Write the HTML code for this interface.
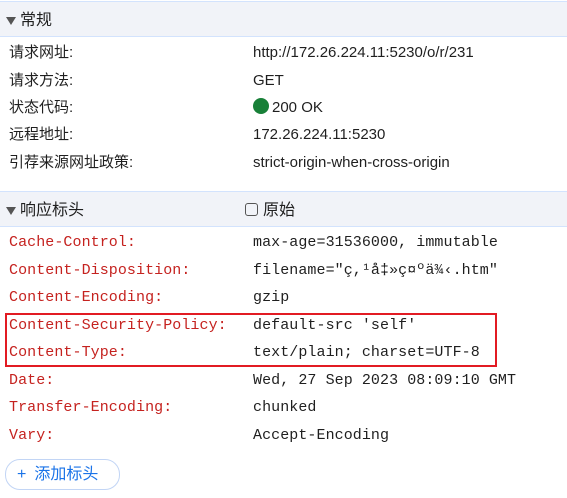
<!DOCTYPE html>
<html><head><meta charset="utf-8"><style>
body{margin:0;width:567px;height:498px;background:#fff;position:relative;overflow:hidden;font-family:"Liberation Sans","Noto Sans CJK SC",sans-serif;font-size:15px;color:#1f1f1f}
.hdr{position:absolute;left:0;width:567px;height:34px;background:#f1f3f8;border-top:1px solid #d3e3fd;border-bottom:1px solid #d3e3fd}
.ht{position:absolute;top:9px;left:20px;font-size:16px;line-height:20px}
.tri{position:absolute;left:6px;top:15px;width:0;height:0;border-left:5px solid transparent;border-right:5px solid transparent;border-top:8px solid #555}
.r,.v{position:absolute;white-space:nowrap;line-height:20px;height:20px}
.r{left:9px}
.v{left:253px}
.m{font-family:"Liberation Mono",monospace;font-size:15px;letter-spacing:0.07px}
.k{color:#c5221f}
</style></head><body>
<div class="hdr" style="top:1px"><div class="tri"></div><div class="ht">常规</div></div>
<div class="r" style="top:43px">请求网址:</div><div class="v" style="top:43px">http://172.26.224.11:5230/o/r/231</div>
<div class="r" style="top:71px">请求方法:</div><div class="v" style="top:71px">GET</div>
<div class="r" style="top:98px">状态代码:</div><div class="v" style="top:98px"><span style="display:inline-block;width:16px;height:16px;border-radius:50%;background:#188038;vertical-align:-2px;margin-right:3px"></span>200 OK</div>
<div class="r" style="top:125px">远程地址:</div><div class="v" style="top:125px">172.26.224.11:5230</div>
<div class="r" style="top:153px">引荐来源网址政策:</div><div class="v" style="top:153px">strict-origin-when-cross-origin</div>
<div class="hdr" style="top:191px"><div class="tri"></div><div class="ht">响应标头</div>
<div class="ht" style="left:245px"><span style="display:inline-block;width:11px;height:11px;border:1.5px solid #555;border-radius:3px;vertical-align:-1px;margin-right:5px"></span>原始</div></div>
<div class="r m k" style="top:233px">Cache-Control:</div><div class="v m" style="top:233px">max-age=31536000, immutable</div>
<div class="r m k" style="top:261px">Content-Disposition:</div><div class="v m" style="top:261px">filename="ç,¹å‡»ç¤ºä¾‹.htm"</div>
<div class="r m k" style="top:288px">Content-Encoding:</div><div class="v m" style="top:288px">gzip</div>
<div class="r m k" style="top:316px">Content-Security-Policy:</div><div class="v m" style="top:316px">default-src 'self'</div>
<div class="r m k" style="top:343px">Content-Type:</div><div class="v m" style="top:343px">text/plain; charset=UTF-8</div>
<div class="r m k" style="top:371px">Date:</div><div class="v m" style="top:371px">Wed, 27 Sep 2023 08:09:10 GMT</div>
<div class="r m k" style="top:398px">Transfer-Encoding:</div><div class="v m" style="top:398px">chunked</div>
<div class="r m k" style="top:426px">Vary:</div><div class="v m" style="top:426px">Accept-Encoding</div>
<div style="position:absolute;left:5px;top:313px;width:488px;height:50px;border:2px solid #e21b23"></div>
<div style="position:absolute;left:5px;top:459px;width:113px;height:29px;border:1px solid #c2d5f5;border-radius:15px;color:#1a73e8;font-size:16px;line-height:29px"><span style="margin-left:11px;margin-right:8px">+</span>添加标头</div>
</body></html>
